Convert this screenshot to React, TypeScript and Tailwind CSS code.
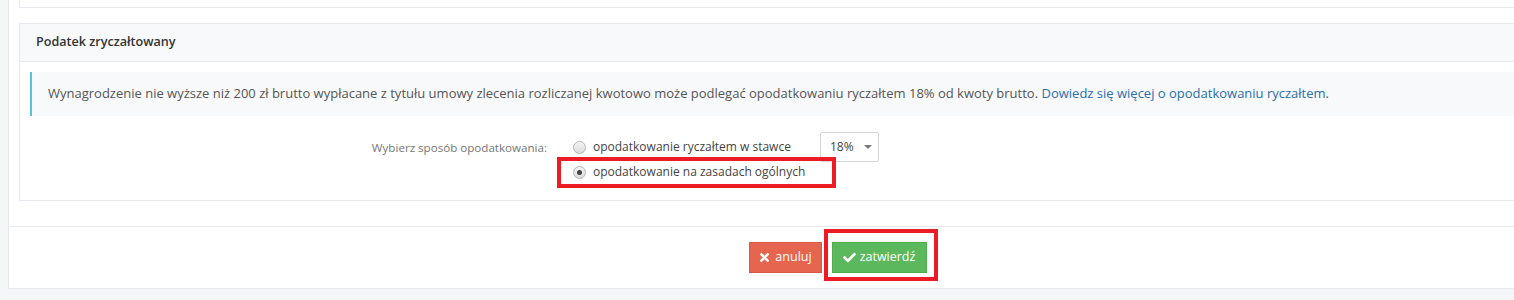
import { FaTimes, FaCheck } from 'react-icons/fa';

function Radio({ checked }: { checked?: boolean }) {
  return (
    <span className="flex h-[13px] w-[13px] shrink-0 items-center justify-center rounded-full border border-[#b5b5b5] bg-gradient-to-b from-[#f4f4f4] to-[#dcdcdc]">
      {checked && <span className="h-[5px] w-[5px] rounded-full bg-[#444]" />}
    </span>
  );
}

export default function App() {
  return (
    <div
      className="h-[300px] overflow-hidden bg-[#f5f6f8] pl-2 text-[13px] text-[#555]"
      style={{ fontFamily: '"Open Sans", "Noto Sans", sans-serif' }}
    >
      <div className="mr-[-20px] h-[289px] border-b border-l border-[#e7e9ee] bg-white">
        {/* previous card, cut off at the top */}
        <div className="ml-[10px] h-[8px] border-b border-l border-[#e7e9ee]" />

        <div className="ml-[10px] mt-[15px] h-[178px] border border-[#e7e9ee]">
          <div className="flex h-[38px] items-center border-b border-[#e7e9ee] bg-[#f8f9fb] pl-[16px] text-[12.6px] font-semibold text-[#333]">
            Podatek zryczałtowany
          </div>
          <div className="px-[10px] pt-[10px]">
            <div className="flex h-[44px] items-center border-l-2 border-[#5bc0de] bg-[#f8f9fb] pl-[16px]">
              <span>
                Wynagrodzenie nie wyższe niż 200 zł brutto wypłacane z tytułu umowy zlecenia rozliczanej kwotowo może podlegać opodatkowaniu ryczałtem 18% od kwoty brutto.{' '}
                <a className="text-[#2a6ead]">Dowiedz się więcej o opodatkowaniu ryczałtem</a>.
              </span>
            </div>

            <div className="mt-[16px] flex text-[12px]">
              <div className="w-[517px] pt-[7px] text-right text-[11.6px] text-[#777]">Wybierz sposób opodatkowania:</div>
              <div className="ml-[26px]">
                <div className="flex h-[30px] items-center">
                  <Radio />
                  <span className="ml-[7px] text-[#444]">opodatkowanie ryczałtem w stawce</span>
                  <div className="ml-[29px] flex h-[30px] w-[59px] items-center justify-between rounded-[2px] border border-[#d5d5d5] pl-[9px] pr-[6px] text-[#444]">
                    <span>18%</span>
                    <span className="h-0 w-0 border-x-[4px] border-t-[4px] border-x-transparent border-t-[#777]" />
                  </div>
                </div>
                <div className="relative flex h-[20px] items-center">
                  <Radio checked />
                  <span className="ml-[7px] text-[#444]">opodatkowanie na zasadach ogólnych</span>
                  <div className="pointer-events-none absolute left-[-16px] top-[-5px] h-[31px] w-[279px] border-4 border-[#ed1c24]" />
                </div>
              </div>
            </div>
          </div>
        </div>

        <div className="mt-[25px] flex h-[62px] justify-center border-t border-[#e7e9ee] pt-[15px]">
          <div className="ml-[132px] flex gap-[10px] text-[12.5px]">
            <button className="flex h-[31px] w-[73px] items-center justify-center gap-[4px] border border-[#d9594a] bg-[#e5654f] text-white">
              <FaTimes className="h-[13px] w-[13px]" />
              anuluj
            </button>
            <div className="relative">
              <button className="flex h-[31px] w-[95px] items-center justify-center gap-[4px] border border-[#4cae4c] bg-[#5cb85c] text-white">
                <FaCheck className="h-[13px] w-[13px]" />
                zatwierdź
              </button>
              <div className="pointer-events-none absolute left-[-8px] top-[-13px] h-[52px] w-[114px] border-4 border-[#ed1c24]" />
            </div>
          </div>
        </div>
      </div>
    </div>
  );
}
